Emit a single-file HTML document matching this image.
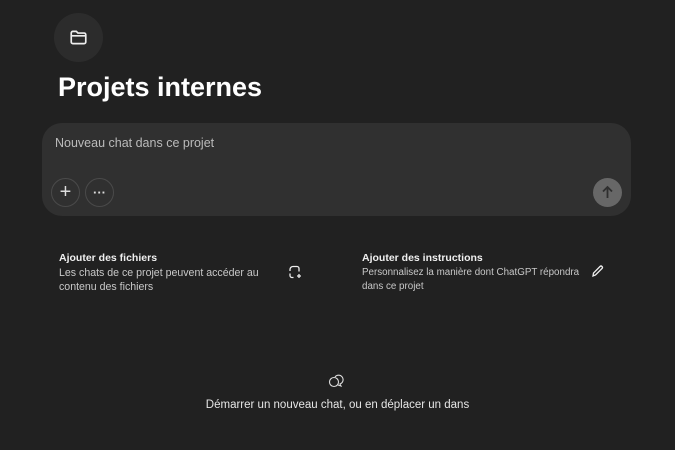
<!DOCTYPE html><html><head><style>
body{margin:0;width:675px;height:450px;background:#212121;font-family:"Liberation Sans",sans-serif;color:#ececec;position:relative;overflow:hidden}
.a{position:absolute}
</style></head><body>
<div class="a" style="left:54px;top:13px;width:49px;height:49px;border-radius:50%;background:#2c2c2c"></div>
<svg class="a" style="left:69px;top:28px" width="19" height="19" viewBox="0 0 17 17" fill="none" stroke="#eee" stroke-width="1.5"><path d="M2 4.5a1.5 1.5 0 0 1 1.5-1.5h3l1.5 1.5h5.5a1.5 1.5 0 0 1 1.5 1.5v6.5a1.5 1.5 0 0 1-1.5 1.5h-10A1.5 1.5 0 0 1 2 12.5z M2 7h13"/></svg>
<div class="a" style="left:58px;top:72px;font-size:27px;font-weight:bold;color:#fff">Projets internes</div>
<div class="a" style="left:42px;top:123px;width:589px;height:93px;border-radius:20px;background:#303030"></div>
<div class="a" style="left:55px;top:136px;font-size:12.5px;color:#bbb">Nouveau chat dans ce projet</div>
<div class="a" style="left:51px;top:178px;width:27px;height:27px;border:1px solid #4a4a4a;border-radius:50%;color:#ddd;font-size:20px;line-height:26px;text-align:center">+</div>
<div class="a" style="left:85px;top:178px;width:27px;height:27px;border:1px solid #4a4a4a;border-radius:50%;color:#ddd;font-size:13px;line-height:27px;text-align:center;font-weight:bold">···</div>
<div class="a" style="left:593px;top:178px;width:29px;height:29px;border-radius:50%;background:#676767"></div>
<svg class="a" style="left:599px;top:184px" width="17" height="17" viewBox="0 0 17 17" fill="none" stroke="#2f2f2f" stroke-width="1.8"><path d="M8.5 14V3M4 7.5l4.5-4.5 4.5 4.5"/></svg>
<div class="a" style="left:59px;top:252px;font-size:10.5px;font-weight:bold;color:#f0f0f0">Ajouter des fichiers</div>
<div class="a" style="left:59px;top:266px;font-size:10.6px;line-height:14px;color:#c8c8c8;width:220px">Les chats de ce projet peuvent accéder au contenu des fichiers</div>
<svg class="a" style="left:287px;top:264px" width="16" height="16" viewBox="0 0 16 16" fill="none" stroke="#eee" stroke-width="1.3"><path d="M6 2.5h4a2 2 0 0 1 2 2v3M3 7V5.5a3 3 0 0 1 3-3M3 9.5v2a2 2 0 0 0 2 2h1.5M12 10v4M10 12h4"/></svg>
<div class="a" style="left:362px;top:252px;font-size:10.5px;font-weight:bold;color:#f0f0f0">Ajouter des instructions</div>
<div class="a" style="left:362px;top:266px;font-size:9.8px;line-height:14px;color:#c8c8c8;width:226px">Personnalisez la manière dont ChatGPT répondra dans ce projet</div>
<svg class="a" style="left:590px;top:264px" width="15" height="15" viewBox="0 0 15 15" fill="none" stroke="#eee" stroke-width="1.3"><path d="M3 12l.5-3 6.5-6.5a1.4 1.4 0 0 1 2 2L5.5 11z"/></svg>
<svg class="a" style="left:327px;top:373px" width="18" height="16" viewBox="0 0 18 16" fill="none" stroke="#ddd" stroke-width="1.1"><circle cx="7" cy="9" r="4.5"/><path d="M8 4a4.5 4.5 0 1 1 5 7l1 2-3-1"/></svg>
<div class="a" style="left:0;width:675px;top:399px;text-align:center;font-size:11.5px;color:#e6e6e6">Démarrer un nouveau chat, ou en déplacer un dans</div>
</body></html>
